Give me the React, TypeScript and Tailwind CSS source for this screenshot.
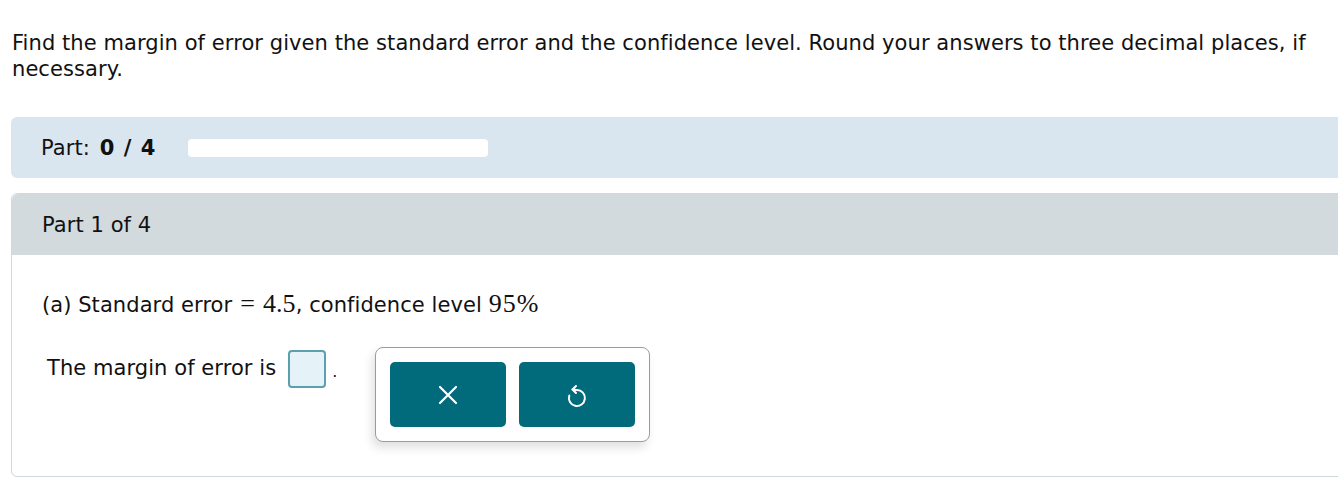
export default function App() {
  return (
    <div className="w-[1338px] h-[485px] overflow-hidden bg-white font-['DejaVu_Sans',Verdana,sans-serif] text-[21px] tracking-[0.07px] text-[#111]">
      {/* Question */}
      <p className="pl-3 pt-[30px] leading-[26px] pr-4">
        Find the margin of error given the standard error and the confidence level. Round your answers to three decimal places, if necessary.
      </p>

      {/* Progress */}
      <div className="ml-[11px] mr-[-10px] mt-[35px] flex h-[61px] items-center rounded-l-md bg-[#dae6ef] pl-[30px] pt-[2px]">
        <span className="w-[147px]">
          Part:{" "}
          <b className="ml-[3px] font-bold">
            0 <span className="mx-[2px]">/</span> 4
          </b>
        </span>
        <div className="mb-[2px] h-[18px] w-[300px] rounded bg-white" />
      </div>

      {/* Part card */}
      <div className="ml-[11px] mr-[-10px] mt-[15px] h-[284px] rounded-l-md border border-[#cfd9dc]">
        <div className="flex h-[61px] items-center rounded-tl-md bg-[#d2dadd] pl-[30px] pt-[3px]">Part 1 of 4</div>
        <div className="pl-[30px] pt-[36px]">
          <p className="leading-[26px]">
            (a) Standard error
            <span className="font-['Liberation_Serif',serif] text-[26px]">
              <span className="mx-[8px]">=</span>4.5
            </span>
            , confidence level{" "}
            <span className="font-['Liberation_Serif',serif] text-[26px] tracking-[1px]">95%</span>
          </p>
          <div className="relative mt-[32px] flex items-center pl-[5px]">
            <span>The margin of error is</span>
            <div className="ml-[12px] h-[38px] w-[38px] rounded-[4px] border-2 border-[#5c9fae] bg-[#e5f3f8]" />
            <span className="ml-[6px] self-end pb-[4px] text-[16px]">.</span>
            <div className="absolute left-[333px] top-[-3px] flex gap-[13px] rounded-lg border border-[#8ba1a9] bg-white p-[14px] shadow-[-3px_6px_10px_rgba(0,0,0,0.12)]">
              <button className="flex h-[65px] w-[116px] items-center justify-center rounded-[5px] bg-[#016a7b] text-white">
                <svg width="20" height="20" viewBox="0 0 20 20" fill="none" stroke="currentColor" strokeWidth="2.2" strokeLinecap="round">
                  <path d="M2 2 L18 18 M18 2 L2 18" />
                </svg>
              </button>
              <button className="flex h-[65px] w-[116px] items-center justify-center rounded-[5px] bg-[#016a7b] text-white">
                <svg width="24" height="26" viewBox="0 0 24 26" fill="none" stroke="currentColor" strokeWidth="2" strokeLinecap="round" strokeLinejoin="round">
                  <path d="M12 8 A8 8 0 1 1 4.3 13.5" />
                  <path d="M11 4 L7.5 7.5 L11 11" />
                  <path d="M7.5 7.5 Q10 8 12 8" />
                </svg>
              </button>
            </div>
          </div>
        </div>
      </div>
    </div>
  );
}
